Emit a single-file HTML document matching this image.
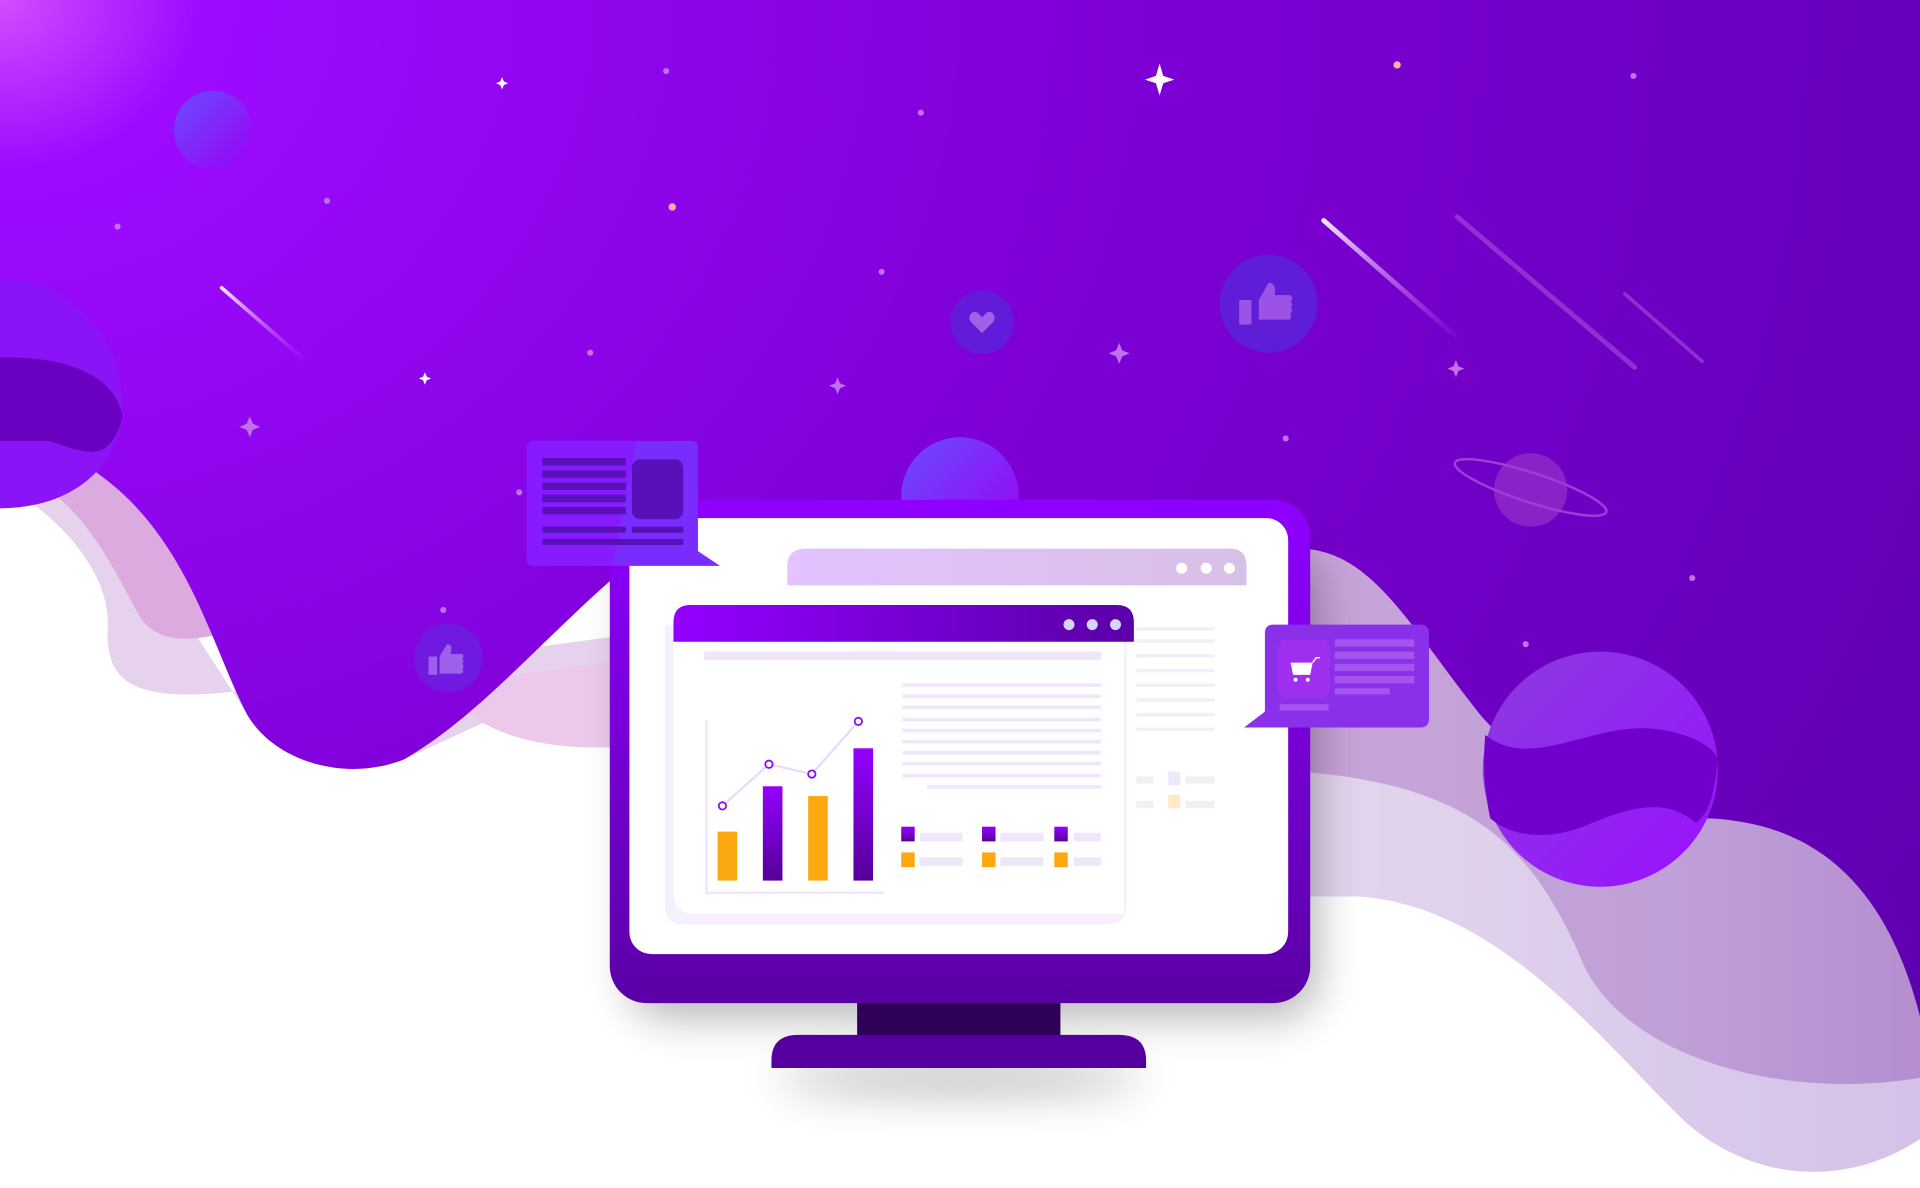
<!DOCTYPE html>
<html><head><meta charset="utf-8"><style>html,body{margin:0;padding:0;background:#fff;overflow:hidden}svg{display:block}</style></head>
<body>
<svg width="1920" height="1188" viewBox="0 0 1568 970" preserveAspectRatio="none" xmlns="http://www.w3.org/2000/svg">
<defs>
<radialGradient id="bg" cx="0" cy="0" r="1.3" gradientUnits="objectBoundingBox" gradientTransform="scale(1,1.6)">
<stop offset="0" stop-color="#d54bff"/><stop offset="0.08" stop-color="#9d0bff"/><stop offset="0.45" stop-color="#7d00d6"/><stop offset="1" stop-color="#5800a8"/></radialGradient>
<linearGradient id="wv1" x1="0" y1="0" x2="1" y2="0"><stop offset="0" stop-color="#e4d6ee"/><stop offset="1" stop-color="#d4c2e8"/></linearGradient>
<linearGradient id="wv2" x1="0" y1="0" x2="1" y2="0"><stop offset="0" stop-color="#c8a4d8"/><stop offset="0.6" stop-color="#c0a0d8"/><stop offset="1" stop-color="#b48ed0"/></linearGradient>
<linearGradient id="frame" x1="0" y1="0" x2="0" y2="1"><stop offset="0" stop-color="#8f00ff"/><stop offset="1" stop-color="#5a00a6"/></linearGradient>
<linearGradient id="hdr" x1="0" y1="0" x2="1" y2="0"><stop offset="0" stop-color="#9300ff"/><stop offset="1" stop-color="#5a00a8"/></linearGradient>
<linearGradient id="hdr2" x1="0" y1="0" x2="1" y2="0"><stop offset="0" stop-color="#e3c2ff"/><stop offset="1" stop-color="#d7c0e6"/></linearGradient>
<linearGradient id="bar" x1="0" y1="0" x2="0" y2="1"><stop offset="0" stop-color="#9300ff"/><stop offset="1" stop-color="#560099"/></linearGradient>
<linearGradient id="orb" x1="0" y1="0" x2="1" y2="1"><stop offset="0" stop-color="#6a4bff"/><stop offset="1" stop-color="#9a00f5"/></linearGradient>
<linearGradient id="bigorb" x1="0" y1="0" x2="1" y2="1"><stop offset="0" stop-color="#8a3ce0"/><stop offset="1" stop-color="#9a10ff"/></linearGradient>
<filter id="sh" filterUnits="userSpaceOnUse" x="300" y="300" width="1000" height="700"><feGaussianBlur stdDeviation="18"/></filter>
<linearGradient id="met" x1="0" y1="0" x2="1" y2="1"><stop offset="0" stop-color="#ffffff" stop-opacity="0.9"/><stop offset="1" stop-color="#e080ff" stop-opacity="0"/></linearGradient>
</defs>
<rect width="1568" height="970" fill="#fff"/>
<!-- left light waves -->
<path d="M0 395 C50 420 90 470 88 510 C86 550 100 568 160 567 C195 566 215 560 240 555 L500 520 L500 610 C460 612 420 605 395 590 L330 620 L200 580 L70 380 L0 395Z" fill="#e6d2ec"/>
<path d="M40 400 C80 430 100 480 115 505 C130 525 155 525 190 515 L160 440 L70 380Z" fill="#dcaade"/>
<path d="M360 560 C390 600 440 612 500 610 L500 540Z" fill="#ecc8ea"/>
<!-- right light waves -->
<path d="M1060 445 L1568 445 L1568 930 C1500 975 1420 960 1370 910 C1300 840 1220 740 1110 732 L1060 732Z" fill="url(#wv1)"/>
<path d="M1060 445 L1568 445 L1568 880 C1450 900 1320 860 1290 780 C1250 690 1200 640 1060 630Z" fill="url(#wv2)"/>
<!-- main purple sky -->
<path d="M0 0 H1568 V830 C1540 720 1480 670 1390 668 C1320 665 1260 640 1210 585 C1150 510 1120 448 1060 448 L540 440 C460 500 400 580 330 620 C280 640 220 620 200 580 C170 520 150 430 70 380 C50 400 30 415 0 415 Z" fill="url(#bg)"/>
<!-- left blob -->
<path d="M0 228 C50 225 100 270 100 330 C100 380 60 415 0 415Z" fill="#8a14f6"/>
<path d="M0 292 C60 290 95 310 100 340 C90 380 70 370 40 360 L0 360Z" fill="#6a00c0"/>
<!-- orbs -->
<circle cx="174" cy="106" r="32" fill="url(#orb)"/>
<circle cx="784" cy="405" r="48" fill="url(#orb)"/>
<circle cx="1250" cy="400" r="30" fill="#8a22c8"/>
<ellipse cx="1250" cy="398" rx="65" ry="12" transform="rotate(18 1250 398)" fill="none" stroke="#9a40d8" stroke-width="2"/>
<circle cx="1307" cy="628" r="96" fill="url(#bigorb)"/>
<path d="M1213 600 C1250 630 1300 590 1350 595 C1380 598 1400 610 1403 620 C1400 650 1395 665 1385 672 C1360 650 1330 660 1300 672 C1260 690 1230 680 1217 668 C1212 645 1211 620 1213 600Z" fill="#7200cc"/>
<!-- meteors -->
<g stroke-linecap="round">
<line x1="181" y1="235" x2="250" y2="295" stroke="url(#met)" stroke-width="3"/>
<line x1="1081" y1="180" x2="1195" y2="280" stroke="url(#met)" stroke-width="4"/>
<line x1="1190" y1="177" x2="1335" y2="300" stroke="#b060e0" stroke-opacity="0.5" stroke-width="4"/>
<line x1="1327" y1="240" x2="1390" y2="295" stroke="#b060e0" stroke-opacity="0.5" stroke-width="3"/>
</g>
<!-- stars -->
<g fill="#fff">
<path d="M947 52 L950 62 L959 65 L950 68 L947 78 L944 68 L935 65 L944 62Z"/>
<path d="M410 63 l1.5 3.5 3.5 1.5 -3.5 1.5 -1.5 3.5 -1.5 -3.5 -3.5 -1.5 3.5 -1.5z"/>
<path d="M347 304 l1.5 3.5 3.5 1.5 -3.5 1.5 -1.5 3.5 -1.5 -3.5 -3.5 -1.5 3.5 -1.5z"/>
</g>
<g fill="#c070e8">
<path d="M204 340 l2.5 6 6 2.5 -6 2.5 -2.5 6 -2.5 -6 -6 -2.5 6 -2.5z"/>
<path d="M914 280 l2.5 6 6 2.5 -6 2.5 -2.5 6 -2.5 -6 -6 -2.5 6 -2.5z"/>
<path d="M684 308 l2 5 5 2 -5 2 -2 5 -2 -5 -5 -2 5 -2z"/>
<path d="M1189 294 l2 5 5 2 -5 2 -2 5 -2 -5 -5 -2 5 -2z"/>
<circle cx="544" cy="58" r="2.5"/><circle cx="752" cy="92" r="2.5"/><circle cx="267" cy="164" r="2.5"/><circle cx="96" cy="185" r="2.5"/><circle cx="720" cy="222" r="2.5"/><circle cx="482" cy="288" r="2.5"/><circle cx="1050" cy="358" r="2.5"/><circle cx="1334" cy="62" r="2.5"/><circle cx="1382" cy="472" r="2.5"/><circle cx="1246" cy="526" r="2.5"/><circle cx="362" cy="498" r="2.5"/><circle cx="424" cy="402" r="2.5"/>
</g>
<g fill="#ffb0a0"><circle cx="549" cy="169" r="3"/><circle cx="1141" cy="53" r="3"/></g>
<!-- social bubbles -->
<circle cx="1036" cy="248" r="40" fill="#5b22d8" opacity="0.85"/>
<path d="M1012 245h10v20h-10z M1028 245 l8 -14 c5 0 6 4 5 10 h12 c3 0 3 5 0 5 c3 0 3 5 0 5 c3 0 3 5 0 5 c2 0 2 5 -1 5 h-24z" fill="#9c52e6"/>
<circle cx="802" cy="263" r="26" fill="#5b22d8" opacity="0.8"/>
<path d="M802 272 l-9 -9 c-4 -5 2 -11 6 -7 l3 3 3 -3 c4 -4 10 2 6 7z" fill="#a060e8"/>
<circle cx="366" cy="537" r="28" fill="#6a20e0" opacity="0.8"/>
<path d="M350 536h7v15h-7z M359 536 l6 -10 c4 0 4 3 3 8 h9 c2 0 2 4 0 4 c2 0 2 4 0 4 c2 0 2 4 0 4 c2 0 2 4 -1 4 h-17z" fill="#9c60ea"/>
<!-- monitor shadow -->
<rect x="515" y="450" width="560" height="380" rx="30" fill="#000" opacity="0.3" filter="url(#sh)"/>
<ellipse cx="784" cy="880" rx="150" ry="12" fill="#000" opacity="0.3" filter="url(#sh)"/>
<!-- stand -->
<rect x="700" y="815" width="166" height="32" fill="#2e0058"/>
<path d="M630 872 V866 Q630 845 652 845 H914 Q936 845 936 866 V872Z" fill="#55009e"/>
<!-- monitor -->
<rect x="498" y="408" width="572" height="411" rx="30" fill="url(#frame)"/>
<rect x="514" y="423" width="538" height="356" rx="18" fill="#fff"/>
<!-- back window -->
<path d="M643 478 V462 Q643 448 658 448 H1004 Q1018 448 1018 462 V478Z" fill="url(#hdr2)"/>
<circle cx="965" cy="464" r="4.5" fill="#fff"/><circle cx="985" cy="464" r="4.5" fill="#fff"/><circle cx="1004" cy="464" r="4.5" fill="#fff"/>
<g fill="#f3f0f5"><rect x="928" y="512" width="64" height="3"/><rect x="928" y="522" width="64" height="3"/><rect x="928" y="534" width="64" height="3"/><rect x="928" y="546" width="64" height="3"/><rect x="928" y="558" width="64" height="3"/><rect x="928" y="570" width="64" height="3"/><rect x="928" y="582" width="64" height="3"/><rect x="928" y="594" width="64" height="3"/><rect x="928" y="634" width="14" height="6"/><rect x="968" y="634" width="24" height="6"/><rect x="928" y="654" width="14" height="6"/><rect x="968" y="654" width="24" height="6"/></g>
<rect x="954" y="630" width="10" height="11" fill="#ebe8ff"/><rect x="954" y="649" width="10" height="11" fill="#ffe9c8"/>
<!-- front window -->
<path d="M543 510 V740 Q543 755 558 755 H905 Q918 755 920 742 V510Z" fill="#f6f0fd"/>
<path d="M550 524 V730 Q550 746 566 746 H918 V524Z" fill="#fff"/>
<path d="M550 524 V508 Q550 494 564 494 H912 Q926 494 926 508 V524Z" fill="url(#hdr)"/>
<circle cx="873" cy="510" r="4.5" fill="#d2d4fa"/><circle cx="892" cy="510" r="4.5" fill="#d2d4fa"/><circle cx="911" cy="510" r="4.5" fill="#d2d4fa"/>
<rect x="575" y="532" width="324" height="7" fill="#efe6f9"/>
<g fill="#efe6f9"><rect x="737" y="558" width="162" height="3"/><rect x="737" y="567" width="162" height="3"/><rect x="737" y="576" width="162" height="3"/><rect x="737" y="586" width="162" height="3"/><rect x="737" y="595" width="162" height="3"/><rect x="737" y="604" width="162" height="3"/><rect x="737" y="613" width="162" height="3"/><rect x="737" y="622" width="162" height="3"/><rect x="737" y="632" width="162" height="3"/><rect x="757" y="641" width="142" height="3"/>
<rect x="751" y="680" width="35" height="7"/><rect x="817" y="680" width="35" height="7"/><rect x="877" y="680" width="22" height="7"/><rect x="751" y="700" width="35" height="7"/><rect x="817" y="700" width="35" height="7"/><rect x="877" y="700" width="22" height="7"/>
<rect x="576" y="588" width="2" height="142"/><rect x="576" y="728" width="146" height="2"/></g>
<g fill="url(#bar)"><rect x="736" y="675" width="11" height="12"/><rect x="802" y="675" width="11" height="12"/><rect x="861" y="675" width="11" height="12"/>
<rect x="623" y="642" width="16" height="77"/><rect x="697" y="611" width="16" height="108"/></g>
<g fill="#fca810"><rect x="736" y="696" width="11" height="12"/><rect x="802" y="696" width="11" height="12"/><rect x="861" y="696" width="11" height="12"/>
<rect x="586" y="679" width="16" height="40"/><rect x="660" y="650" width="16" height="69"/></g>
<polyline points="590,658 628,624 663,632 701,589" fill="none" stroke="#eadcf8" stroke-width="2"/>
<g fill="#fff" stroke="#8a10f0" stroke-width="1.5"><circle cx="590" cy="658" r="3"/><circle cx="628" cy="624" r="3"/><circle cx="663" cy="632" r="3"/><circle cx="701" cy="589" r="3"/></g>
<!-- left card -->
<path d="M436 360 H564 Q570 360 570 366 V450 L588 462 H436 Q430 462 430 456 V366 Q430 360 436 360Z" fill="#7a2cff"/>
<path d="M436 360 H520 L500 462 H436 Q430 462 430 456 V366 Q430 360 436 360Z" fill="#8f10ff" opacity="0.6"/>
<g fill="#5a10b8"><rect x="443" y="374" width="68" height="6"/><rect x="443" y="384" width="68" height="6"/><rect x="443" y="394" width="68" height="6"/><rect x="443" y="404" width="68" height="6"/><rect x="443" y="414" width="68" height="6"/><rect x="443" y="430" width="68" height="5"/><rect x="516" y="430" width="42" height="5"/><rect x="443" y="440" width="115" height="5"/><rect x="516" y="375" width="42" height="49" rx="7"/></g>
<!-- right card -->
<path d="M1040 510 H1160 Q1167 510 1167 517 V587 Q1167 594 1160 594 H1016 L1033 581 V517 Q1033 510 1040 510Z" fill="#8a30e8"/>
<rect x="1044" y="522" width="42" height="48" rx="7" fill="#a030f0"/>
<path d="M1054 541 h18 l-2 10 h-14z" fill="#fff"/><path d="M1072 541 l3 -4 h3" stroke="#fff" stroke-width="1.2" fill="none"/><circle cx="1058" cy="555" r="1.6" fill="#fff"/><circle cx="1068" cy="555" r="1.6" fill="#fff"/>
<g fill="#a454f0"><rect x="1090" y="522" width="65" height="6"/><rect x="1090" y="532" width="65" height="6"/><rect x="1090" y="542" width="65" height="6"/><rect x="1090" y="552" width="65" height="6"/><rect x="1090" y="562" width="45" height="5"/><rect x="1045" y="575" width="40" height="5"/></g>
</svg>
</body></html>
